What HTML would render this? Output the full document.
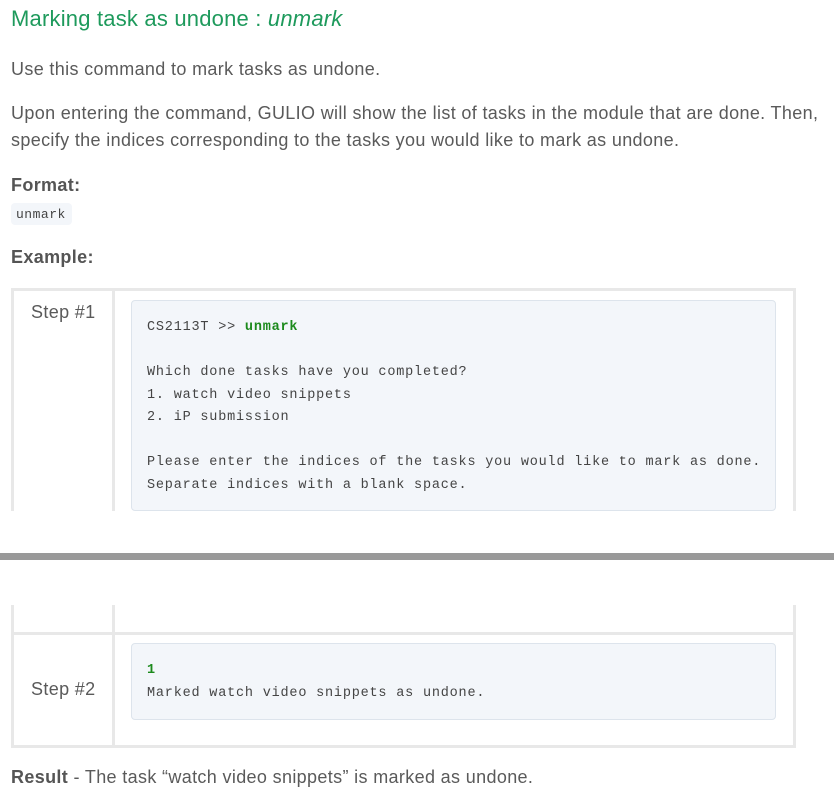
<!DOCTYPE html>
<html><head><meta charset="utf-8"><style>
body{margin:0;width:834px;height:797px;background:#fff;position:relative;overflow:hidden;font-family:"Liberation Sans",sans-serif;color:#5a5a5a}
.a{position:absolute;white-space:nowrap}
.p{font-size:18px;letter-spacing:0.35px}
.m{font-family:"Liberation Mono",monospace;font-size:13.5px;letter-spacing:0.8px;color:#444}
.g{color:#1c8a1c;font-weight:bold}
.box{position:absolute;background:#f3f6fa;border:1px solid #dde4ec;border-radius:4px}
.l{position:absolute;background:#e8e8e8}
</style></head><body>
<div class="a" style="left:11px;top:6px;font-size:22px;color:#1e9a5c;letter-spacing:0.2px">Marking task as undone : <i>unmark</i></div>
<div class="a p" style="left:11px;top:59px">Use this command to mark tasks as undone.</div>
<div class="a p" style="left:11px;top:103px">Upon entering the command, GULIO will show the list of tasks in the module that are done. Then,</div>
<div class="a p" style="left:11px;top:130px">specify the indices corresponding to the tasks you would like to mark as undone.</div>
<div class="a p" style="left:11px;top:175px;font-weight:bold;color:#555">Format:</div>
<div class="box" style="left:11px;top:203px;width:61px;height:22px;border:none"></div>
<div class="a m" style="left:16px;top:207px;font-size:13px;letter-spacing:0.5px">unmark</div>
<div class="a p" style="left:11px;top:247px;font-weight:bold;color:#555">Example:</div>

<div class="l" style="left:11px;top:288px;width:785px;height:3px"></div>
<div class="l" style="left:11px;top:288px;width:3px;height:223px"></div>
<div class="l" style="left:112px;top:288px;width:3px;height:223px"></div>
<div class="l" style="left:793px;top:288px;width:3px;height:223px"></div>
<div class="a p" style="left:31px;top:302px">Step #1</div>
<div class="box" style="left:131px;top:300px;width:643px;height:209px"></div>
<div class="a m" style="left:147px;top:317px;line-height:22.5px">CS2113T &gt;&gt; <span class="g">unmark</span><br><br>Which done tasks have you completed?<br>1. watch video snippets<br>2. iP submission<br><br>Please enter the indices of the tasks you would like to mark as done.<br>Separate indices with a blank space.</div>

<div style="position:absolute;left:0;top:553px;width:834px;height:7px;background:#999"></div>

<div class="l" style="left:11px;top:605px;width:3px;height:143px"></div>
<div class="l" style="left:112px;top:605px;width:3px;height:143px"></div>
<div class="l" style="left:793px;top:605px;width:3px;height:143px"></div>
<div class="l" style="left:11px;top:632px;width:785px;height:3px"></div>
<div class="l" style="left:11px;top:745px;width:785px;height:3px"></div>
<div class="a p" style="left:31px;top:679px">Step #2</div>
<div class="box" style="left:131px;top:643px;width:643px;height:75px"></div>
<div class="a m" style="left:147px;top:659px;line-height:23px"><span class="g">1</span><br>Marked watch video snippets as undone.</div>

<div class="a p" style="left:11px;top:767px"><b style="color:#555">Result</b> - The task “watch video snippets” is marked as undone.</div>
</body></html>
